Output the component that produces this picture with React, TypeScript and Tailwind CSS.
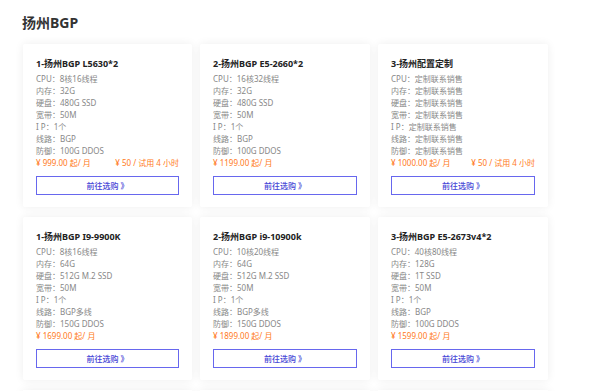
import React from 'react';

interface Plan {
  title: string;
  specs: [string, string][];
  price: string;
  trial?: string;
}

const plans: Plan[] = [
  {
    title: '1-扬州BGP L5630*2',
    specs: [['CPU', '8核16线程'], ['内存', '32G'], ['硬盘', '480G SSD'], ['宽带', '50M'], ['I P', '1个'], ['线路', 'BGP'], ['防御', '100G DDOS']],
    price: '¥ 999.00 起/ 月',
    trial: '¥ 50 / 试用 4 小时',
  },
  {
    title: '2-扬州BGP E5-2660*2',
    specs: [['CPU', '16核32线程'], ['内存', '32G'], ['硬盘', '480G SSD'], ['宽带', '50M'], ['I P', '1个'], ['线路', 'BGP'], ['防御', '100G DDOS']],
    price: '¥ 1199.00 起/ 月',
  },
  {
    title: '3-扬州配置定制',
    specs: [['CPU', '定制联系销售'], ['内存', '定制联系销售'], ['硬盘', '定制联系销售'], ['宽带', '定制联系销售'], ['I P', '定制联系销售'], ['线路', '定制联系销售'], ['防御', '定制联系销售']],
    price: '¥ 1000.00 起/ 月',
    trial: '¥ 50 / 试用 4 小时',
  },
  {
    title: '1-扬州BGP I9-9900K',
    specs: [['CPU', '8核16线程'], ['内存', '64G'], ['硬盘', '512G M.2 SSD'], ['宽带', '50M'], ['I P', '1个'], ['线路', 'BGP多线'], ['防御', '150G DDOS']],
    price: '¥ 1699.00 起/ 月',
  },
  {
    title: '2-扬州BGP i9-10900k',
    specs: [['CPU', '10核20线程'], ['内存', '64G'], ['硬盘', '512G M.2 SSD'], ['宽带', '50M'], ['I P', '1个'], ['线路', 'BGP多线'], ['防御', '150G DDOS']],
    price: '¥ 1899.00 起/ 月',
  },
  {
    title: '3-扬州BGP E5-2673v4*2',
    specs: [['CPU', '40核80线程'], ['内存', '128G'], ['硬盘', '1T SSD'], ['宽带', '50M'], ['I P', '1个'], ['线路', 'BGP'], ['防御', '100G DDOS']],
    price: '¥ 1599.00 起/ 月',
  },
];

function PlanCard({ plan }: { plan: Plan }) {
  return (
    <div className="bg-white rounded-[2px] shadow-[0_0_10px_rgba(0,0,0,0.07)] px-[13px] pt-[14px] pb-[12px] h-[163px] flex flex-col">
      <h3 className="text-[9px] leading-[12px] font-bold text-[#222] whitespace-nowrap">{plan.title}</h3>
      <ul className="mt-[3px] text-[8px] leading-[12px] text-[#888]">
        {plan.specs.map(([k, v]) => (
          <li key={k} className="whitespace-nowrap">
            {k}：{v}
          </li>
        ))}
      </ul>
      <div className="flex justify-between text-[8px] leading-[12px] text-[#ff7a22] whitespace-nowrap">
        <span>{plan.price}</span>
        {plan.trial && <span>{plan.trial}</span>}
      </div>
      <button
        type="button"
        className="mt-[7px] h-[19px] w-full border border-[#6767ee] text-[8px] text-[#4646d6] font-medium flex items-center justify-center"
      >
        前往选购 》
      </button>
    </div>
  );
}

export default function App() {
  return (
    <div
      className="w-[600px] h-[391px] overflow-hidden bg-white"
      style={{ fontFamily: '"Noto Sans", "Noto Sans CJK SC", sans-serif' }}
    >
      <div className="pl-[23px] pt-[14px]">
        <h2 className="text-[14px] leading-[18px] font-bold text-[#333] -ml-[1px]">扬州BGP</h2>
        <div className="mt-[12px] grid grid-cols-[169px_170px_170px] gap-x-[8px] gap-y-[10px]">
          {plans.map((p, i) => (
            <PlanCard key={i} plan={p} />
          ))}
          {/* next row, only its top edge is visible */}
          <div className="bg-white shadow-[0_0_10px_rgba(0,0,0,0.07)] h-[163px]" />
          <div className="bg-white shadow-[0_0_10px_rgba(0,0,0,0.07)] h-[163px]" />
          <div className="bg-white shadow-[0_0_10px_rgba(0,0,0,0.07)] h-[163px]" />
        </div>
      </div>
    </div>
  );
}
